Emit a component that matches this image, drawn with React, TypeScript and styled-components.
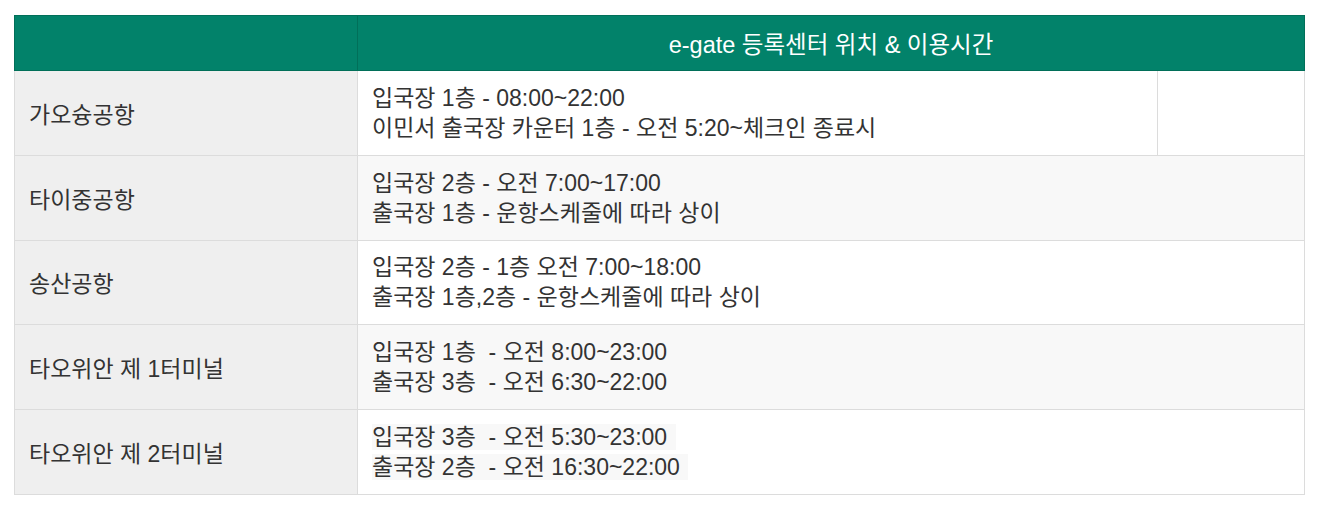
import React from 'react'
import styled, { createGlobalStyle } from 'styled-components'

const GlobalStyle = createGlobalStyle`
    body {
        margin: 0;
        background: #ffffff;
        font-family: "Liberation Sans", Arial, "Noto Sans CJK KR", sans-serif;
        color: #333333;
    }
`

const Wrapper = styled.div`
    padding: 15px 19px 0 14px;
`

const Table = styled.table`
    width: 1290px;
    border-collapse: collapse;
    table-layout: fixed;
    font-size: 23px;
`

const HeadCell = styled.th`
    background: #02826a;
    border: 1px solid #016f59;
    color: #ffffff;
    font-weight: normal;
    font-size: 23.5px;
    height: 54px;
    padding: 0;
    text-align: center;
`

const NameCell = styled.td`
    background: #efefef;
    border: 1px solid #dcdcdc;
    padding: 0 0 0 14px;
    height: 83.8px;
    color: #333333;
`

const InfoCell = styled.td<{ $shade?: boolean }>`
    background: ${ p => p.$shade ? '#f8f8f8' : '#ffffff' };
    border: 1px solid #dcdcdc;
    padding: 0 14px;
    line-height: 30px;
    white-space: pre;
    color: #333333;
`

const Mark = styled.span`
    background: #f8f8f8;
    padding-right: 2px;
`

const rows = [
    {
        name: '타이중공항',
        lines: ['입국장 2층 - 오전 7:00~17:00', '출국장 1층 - 운항스케줄에 따라 상이'],
    },
    {
        name: '송산공항',
        lines: ['입국장 2층 - 1층 오전 7:00~18:00', '출국장 1층,2층 - 운항스케줄에 따라 상이'],
    },
    {
        name: '타오위안 제 1터미널',
        lines: ['입국장 1층  - 오전 8:00~23:00', '출국장 3층  - 오전 6:30~22:00'],
    },
]

export default function App() {
    return (
        <>
            <GlobalStyle />
            <Wrapper>
                <Table>
                    <colgroup>
                        <col style={{ width: 343 }} />
                        <col style={{ width: 800 }} />
                        <col style={{ width: 147 }} />
                    </colgroup>
                    <thead>
                        <tr>
                            <HeadCell></HeadCell>
                            <HeadCell colSpan={ 2 }>e-gate 등록센터 위치 &amp; 이용시간</HeadCell>
                        </tr>
                    </thead>
                    <tbody>
                        <tr>
                            <NameCell>가오슝공항</NameCell>
                            <InfoCell>
                                입국장 1층 - 08:00~22:00<br />
                                이민서 출국장 카운터 1층 - 오전 5:20~체크인 종료시
                            </InfoCell>
                            <InfoCell></InfoCell>
                        </tr>
                        {
                            rows.map( ( r, i ) => (
                                <tr key={ r.name }>
                                    <NameCell>{ r.name }</NameCell>
                                    <InfoCell colSpan={ 2 } $shade={ i % 2 === 0 }>
                                        { r.lines[0] }<br />{ r.lines[1] }
                                    </InfoCell>
                                </tr>
                            ))
                        }
                        <tr>
                            <NameCell>타오위안 제 2터미널</NameCell>
                            <InfoCell colSpan={ 2 }>
                                <Mark>입국장 3층  - 오전 5:30~23:00 </Mark><br />
                                <Mark>출국장 2층  - 오전 16:30~22:00 </Mark>
                            </InfoCell>
                        </tr>
                    </tbody>
                </Table>
            </Wrapper>
        </>
    )
}
